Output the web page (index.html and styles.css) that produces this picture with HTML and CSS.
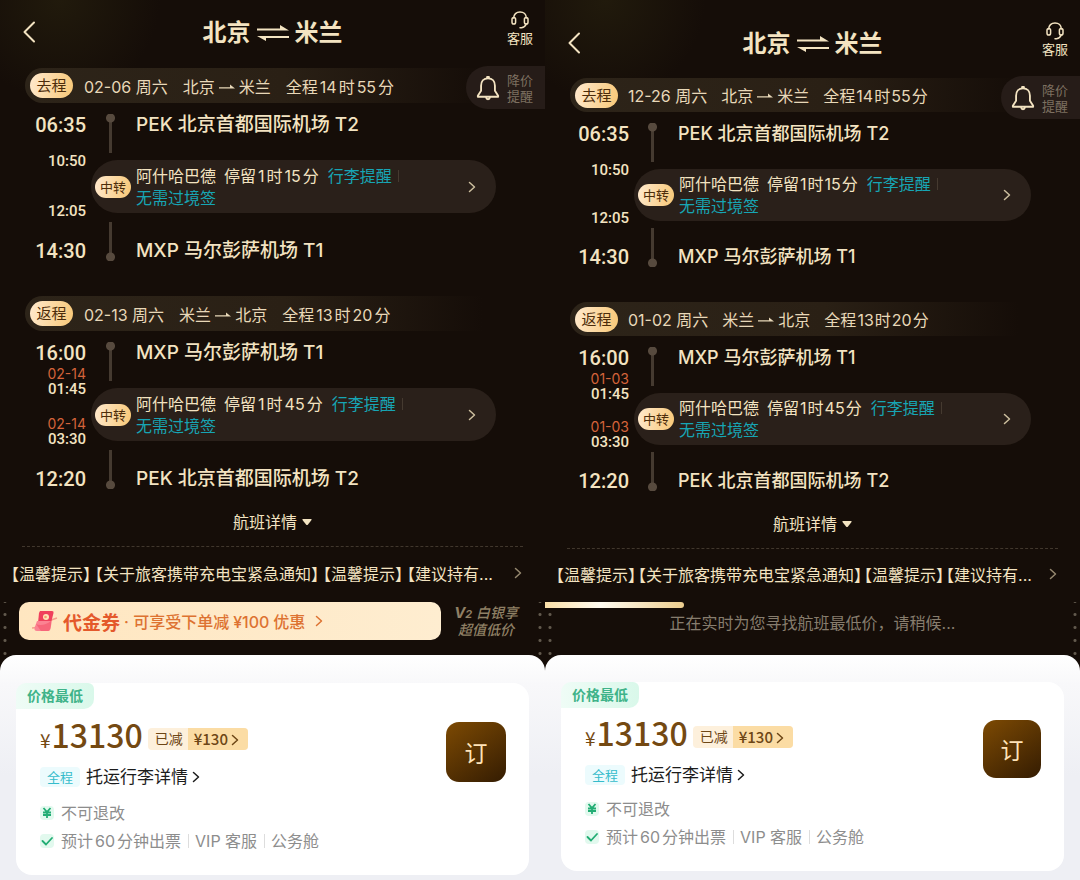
FILE: index.html
```
<!DOCTYPE html>
<html lang="zh-CN">
<head>
    <meta charset="utf-8">
    <meta name="viewport" content="width=device-width, initial-scale=1">
    <title>北京 ⇌ 米兰</title>
    <link rel="stylesheet" href="styles.css">
</head>
<body>
  <!-- shared icons -->
  <svg class="sprite" aria-hidden="true">
    <symbol id="back" viewBox="0 0 14 22">
      <path d="M12 1.500 2.500 11 12 20.500" fill="none" stroke="currentColor" stroke-width="2" stroke-linecap="round" stroke-linejoin="round"/>
    </symbol>
    <symbol id="chevron" viewBox="0 0 8 12">
      <path d="M1.500 1.500 6.500 6l-5 4.500" fill="none" stroke="currentColor" stroke-width="1.500" stroke-linecap="round" stroke-linejoin="round"/>
    </symbol>
    <symbol id="swap" viewBox="0 0 32 16">
      <path d="M0 3.500h23V0l9 5.500H0zM32 11H0l9 5v-3h23z" fill="currentColor"/>
    </symbol>
    <symbol id="to" viewBox="0 0 16 8">
      <path d="M0 4.200h11V1.500l5 4H0z" fill="currentColor"/>
    </symbol>
    <symbol id="headset" viewBox="0 0 18 18">
      <g fill="none" stroke="currentColor" stroke-width="1.500" stroke-linecap="round">
        <path d="M2.700 7C2.700 3.400 5.300 1 9 1s6.300 2.400 6.300 6"/>
        <rect x="1" y="6.500" width="3.600" height="6.500" rx="1.800"/>
        <rect x="13.400" y="6.500" width="3.600" height="6.500" rx="1.800"/>
        <path d="M15.200 13c-.6 2-2.200 3.300-4.700 3.700M9 16.800h1.500"/>
      </g>
    </symbol>
    <symbol id="bell" viewBox="0 0 26 28">
      <g fill="none" stroke="currentColor" stroke-width="2" stroke-linejoin="round" stroke-linecap="round">
        <path d="M13 3.500c-4.800 0-7.500 3.600-7.500 8v5.500L2 22.500v1h22v-1L20.500 17v-5.500c0-4.400-2.700-8-7.500-8z"/>
        <path d="M12 3.200V2h2v1.200M11 24.500c.3 2.200 3.700 2.200 4 0"/>
      </g>
    </symbol>
    <symbol id="caret" viewBox="0 0 10 8">
      <path d="M1 1h8q1 0 .5 1L6 6.500q-1 1-2 0L.5 2Q0 1 1 1z" fill="currentColor"/>
    </symbol>
    <symbol id="coupon" viewBox="0 0 28 24">
      <path d="M1 19q5 0 8-4l17-6" fill="none" stroke="#f5a08c" stroke-width="1.500"/>
      <path d="M9 2h12q2 0 1.500 2L20 14H7l1-10z" fill="#f0405c"/>
      <path d="M6 12h13q2 0 1.500 2l-1 6q-.5 2-2.500 2H6q-3 0-2.500-3z" fill="#fb8392"/>
      <path d="M5 15c4 2 10 1 15-3v4l-1 4q-.5 2-2 2H10z" fill="#f7667a"/>
      <circle cx="15" cy="8" r="3" fill="#ffe3b8"/>
      <circle cx="14.500" cy="8" r="1.300" fill="#f6a06c"/>
    </symbol>
    <symbol id="yen" viewBox="0 0 12 12">
      <path d="M2.500 1 6 5.200 9.500 1M6 5v6M2 5.500h8M2 8h8" fill="none" stroke="currentColor" stroke-width="1.800"/>
    </symbol>
    <symbol id="check" viewBox="0 0 12 12">
      <path d="M1.500 6 5 9.500l6-6.500" fill="none" stroke="currentColor" stroke-width="1.800" stroke-linecap="round" stroke-linejoin="round"/>
    </symbol>
  </svg>

  <main class="screens">
    <!-- February trip -->
    <section class="screen">
      <header class="header">
        <button class="back" aria-label="返回"><svg><use href="#back"/></svg></button>
        <h1 class="title">北京 <svg><use href="#swap"/></svg> 米兰</h1>
        <button class="service"><svg><use href="#headset"/></svg>客服</button>
      </header>

      <article class="leg">
        <div class="leg-bar">
          <span class="badge">去程</span>
          <span>02-06 周六</span>
          <span>北京<svg class="to"><use href="#to"/></svg>米兰</span>
          <span>全程<i>14</i>时<i>55</i>分</span>
        </div>
        <button class="alert"><svg><use href="#bell"/></svg><span>降价<br>提醒</span></button>
        <div class="route">
          <time class="time dep">06:35</time>
          <span class="rail rail-top"></span>
          <h2 class="airport dep">PEK 北京首都国际机场 T2</h2>
          <div class="stop-times">
            <div><time>10:50</time></div>
            <div><time>12:05</time></div>
          </div>
          <button class="transfer">
            <span class="badge small">中转</span>
            <span class="transfer-text">阿什哈巴德<span class="stay">停留<i>1</i>时<i>15</i>分</span><em class="divided">行李提醒</em><br><em>无需过境签</em></span>
            <svg class="chevron"><use href="#chevron"/></svg>
          </button>
          <time class="time arr">14:30</time>
          <span class="rail rail-bottom"></span>
          <h2 class="airport arr">MXP 马尔彭萨机场 T1</h2>
        </div>
      </article>

      <article class="leg">
        <div class="leg-bar">
          <span class="badge">返程</span>
          <span>02-13 周六</span>
          <span>米兰<svg class="to"><use href="#to"/></svg>北京</span>
          <span>全程<i>13</i>时<i>20</i>分</span>
        </div>
        <div class="route">
          <time class="time dep">16:00</time>
          <span class="rail rail-top"></span>
          <h2 class="airport dep">MXP 马尔彭萨机场 T1</h2>
          <div class="stop-times">
            <div><span class="next-day">02-14</span><time>01:45</time></div>
            <div><span class="next-day">02-14</span><time>03:30</time></div>
          </div>
          <button class="transfer">
            <span class="badge small">中转</span>
            <span class="transfer-text">阿什哈巴德<span class="stay">停留<i>1</i>时<i>45</i>分</span><em class="divided">行李提醒</em><br><em>无需过境签</em></span>
            <svg class="chevron"><use href="#chevron"/></svg>
          </button>
          <time class="time arr">12:20</time>
          <span class="rail rail-bottom"></span>
          <h2 class="airport arr">PEK 北京首都国际机场 T2</h2>
        </div>
      </article>

      <button class="details">航班详情<svg><use href="#caret"/></svg></button>
      <a class="notice" href="#notice">
        <span>【温馨提示】</span>
        <span>【关于旅客携带充电宝紧急通知】</span>
        <span>【温馨提示】</span>
        <span>【建议持有...</span>
        <svg class="chevron"><use href="#chevron"/></svg>
      </a>

      <div class="promo">
        <button class="coupon">
          <svg class="coupon-icon"><use href="#coupon"/></svg>
          <strong>代金券</strong>
          <span>· 可享受下单减<i>¥100</i>优惠</span>
          <svg class="chevron"><use href="#chevron"/></svg>
        </button>
        <p class="member"><b>V<small>2</small></b> 白银享<br>超值低价</p>
      </div>

      <div class="sheet">
        <article class="card">
          <span class="lowest">价格最低</span>
          <div class="fare">
            <div class="fare-info">
              <div class="price-row">
                <span class="price"><small>¥</small>13130</span>
                <button class="discount"><span>已减</span><b>¥130 <svg class="chevron"><use href="#chevron"/></svg></b></button>
              </div>
              <a class="baggage" href="#baggage"><span>全程</span>托运行李详情<svg class="chevron"><use href="#chevron"/></svg></a>
              <ul class="rules">
                <li><svg><use href="#yen"/></svg><span>不可退改</span></li>
                <li><svg><use href="#check"/></svg><span>预计<i>60</i>分钟出票</span><span>VIP 客服</span><span>公务舱</span></li>
              </ul>
            </div>
            <button class="book">订</button>
          </div>
        </article>
      </div>
    </section>

    <!-- December trip, still searching -->
    <section class="screen compact">
      <header class="header">
        <button class="back" aria-label="返回"><svg><use href="#back"/></svg></button>
        <h1 class="title">北京 <svg><use href="#swap"/></svg> 米兰</h1>
        <button class="service"><svg><use href="#headset"/></svg>客服</button>
      </header>

      <article class="leg">
        <div class="leg-bar">
          <span class="badge">去程</span>
          <span>12-26 周六</span>
          <span>北京<svg class="to"><use href="#to"/></svg>米兰</span>
          <span>全程<i>14</i>时<i>55</i>分</span>
        </div>
        <button class="alert"><svg><use href="#bell"/></svg><span>降价<br>提醒</span></button>
        <div class="route">
          <time class="time dep">06:35</time>
          <span class="rail rail-top"></span>
          <h2 class="airport dep">PEK 北京首都国际机场 T2</h2>
          <div class="stop-times">
            <div><time>10:50</time></div>
            <div><time>12:05</time></div>
          </div>
          <button class="transfer">
            <span class="badge small">中转</span>
            <span class="transfer-text">阿什哈巴德<span class="stay">停留<i>1</i>时<i>15</i>分</span><em class="divided">行李提醒</em><br><em>无需过境签</em></span>
            <svg class="chevron"><use href="#chevron"/></svg>
          </button>
          <time class="time arr">14:30</time>
          <span class="rail rail-bottom"></span>
          <h2 class="airport arr">MXP 马尔彭萨机场 T1</h2>
        </div>
      </article>

      <article class="leg">
        <div class="leg-bar">
          <span class="badge">返程</span>
          <span>01-02 周六</span>
          <span>米兰<svg class="to"><use href="#to"/></svg>北京</span>
          <span>全程<i>13</i>时<i>20</i>分</span>
        </div>
        <div class="route">
          <time class="time dep">16:00</time>
          <span class="rail rail-top"></span>
          <h2 class="airport dep">MXP 马尔彭萨机场 T1</h2>
          <div class="stop-times">
            <div><span class="next-day">01-03</span><time>01:45</time></div>
            <div><span class="next-day">01-03</span><time>03:30</time></div>
          </div>
          <button class="transfer">
            <span class="badge small">中转</span>
            <span class="transfer-text">阿什哈巴德<span class="stay">停留<i>1</i>时<i>45</i>分</span><em class="divided">行李提醒</em><br><em>无需过境签</em></span>
            <svg class="chevron"><use href="#chevron"/></svg>
          </button>
          <time class="time arr">12:20</time>
          <span class="rail rail-bottom"></span>
          <h2 class="airport arr">PEK 北京首都国际机场 T2</h2>
        </div>
      </article>

      <button class="details">航班详情<svg><use href="#caret"/></svg></button>
      <a class="notice" href="#notice">
        <span>【温馨提示】</span>
        <span>【关于旅客携带充电宝紧急通知】</span>
        <span>【温馨提示】</span>
        <span>【建议持有...</span>
        <svg class="chevron"><use href="#chevron"/></svg>
      </a>

      <div class="searching">
        <div class="progress" role="progressbar" aria-label="查询进度" aria-valuenow="26" style="width: 26%"></div>
        <p>正在实时为您寻找航班最低价，请稍候...</p>
      </div>

      <div class="sheet">
        <article class="card">
          <span class="lowest">价格最低</span>
          <div class="fare">
            <div class="fare-info">
              <div class="price-row">
                <span class="price"><small>¥</small>13130</span>
                <button class="discount"><span>已减</span><b>¥130 <svg class="chevron"><use href="#chevron"/></svg></b></button>
              </div>
              <a class="baggage" href="#baggage"><span>全程</span>托运行李详情<svg class="chevron"><use href="#chevron"/></svg></a>
              <ul class="rules">
                <li><svg><use href="#yen"/></svg><span>不可退改</span></li>
                <li><svg><use href="#check"/></svg><span>预计<i>60</i>分钟出票</span><span>VIP 客服</span><span>公务舱</span></li>
              </ul>
            </div>
            <button class="book">订</button>
          </div>
        </article>
      </div>
    </section>
  </main>
</body>
</html>
```
FILE: styles.css
```
/* Round trip fare page, two screens side by side */
* {
  box-sizing: border-box;
}

body {
  margin: 0;
  background-color: #150d08;
  color: #f3e3c1;
  font-family: "Inter", "Noto Sans CJK SC", sans-serif;
  font-size: 16px;
}

h1, h2, p, ul {
  margin: 0;
  padding: 0;
}

button {
  border: 0;
  padding: 0;
  margin: 0;
  background: none;
  color: inherit;
  font: inherit;
  text-align: left;
  cursor: pointer;
}

a {
  color: inherit;
  text-decoration: none;
}

i, em {
  font-style: normal;
}

/* numbers inside Chinese text get a little air */
i {
  margin: 0 2px;
}

.sprite {
  display: none;
}

.chevron {
  width: 8px;
  height: 12px;
  flex: none;
}

.screens {
  display: grid;
  grid-template-columns: 545fr 535fr;
  min-height: 100vh;
}

.screen {
  --airport: 19px;
  --time-col: 86px;
  --rail-col: 50px;
  --bar: 35px;
  --stops: 81px;
  --pill: 53px;
  --arr-gap: 19px;
  --leg-gap: 32px;
  --book: 60px;
  min-width: 0;
  display: flex;
  flex-direction: column;
  background: radial-gradient(circle at 60px 0, #211a0c 0, #150d08 100px);
}

.compact {
  --airport: 18px;
  --time-col: 84px;
  --rail-col: 49px;
  --bar: 34px;
  --stops: 79px;
  --pill: 52px;
  --arr-gap: 18px;
  --leg-gap: 32px;
  --book: 58px;
}

.compact .leg i {
  margin: 0 1px;
}

/* Header */
.header {
  display: grid;
  grid-template-columns: 1fr auto 1fr;
  align-items: center;
  height: 64px;
  margin-bottom: 4px;
  padding: 0 12px;
}

.compact .header {
  margin-top: 11px;
  margin-bottom: 3px;
}

.back {
  height: 22px;
  margin-left: 10px;
}

.back svg {
  width: 14px;
  height: 22px;
}

.title {
  display: flex;
  align-items: center;
  gap: 6px;
  padding-top: 2px;
  font-size: 24px;
  line-height: 32px;
  font-weight: 700;
}

.title svg {
  width: 32px;
  height: 16px;
}

.service {
  justify-self: end;
  display: flex;
  flex-direction: column;
  align-items: center;
  padding-bottom: 6px;
  font-size: 13px;
  line-height: 19px;
}

.service svg {
  width: 18px;
  height: 18px;
}

/* One flight direction */
.leg {
  position: relative;
  padding-bottom: var(--leg-gap);
}

.leg + .leg {
  padding-bottom: 0;
}

.leg-bar {
  display: flex;
  align-items: center;
  gap: 15px;
  height: var(--bar);
  margin-left: 25px;
  padding-left: 5px;
  border-radius: 18px 0 0 18px;
  background: linear-gradient(90deg, #2d2419, #2a2015 50%, #150d08 88%);
  color: #e8d8b8;
  white-space: nowrap;
}

.compact .leg-bar {
  gap: 14px;
}

.badge {
  height: 25px;
  width: 43px;
  margin-right: -4px;
  border-radius: 13px;
  background: linear-gradient(100deg, #ffe9cd, #f8c877);
  color: #4c2c0a;
  font-size: 15px;
  line-height: 25px;
  text-align: center;
  flex: none;
}

.to {
  width: 16px;
  height: 8px;
  margin: 0 4px;
  vertical-align: 2px;
}

.alert {
  position: absolute;
  right: 0;
  top: -2px;
  display: flex;
  align-items: center;
  gap: 7px;
  height: 43px;
  padding: 0 12px 0 10px;
  border-radius: 22px 0 0 22px;
  background-color: #261c18;
  color: #7d7060;
  font-size: 13px;
  line-height: 16px;
}

.alert svg {
  width: 24px;
  height: 28px;
  color: #f3e3c1;
}

.route {
  display: grid;
  grid-template-columns: var(--time-col) var(--rail-col) 1fr;
  grid-template-rows: 26px var(--stops) auto;
  padding-top: 9px;
}

.dep {
  grid-row: 1;
}

.arr {
  grid-row: 3;
  margin-top: var(--arr-gap);
}

.time {
  grid-column: 1;
  justify-self: end;
  font-family: "Roboto", sans-serif;
  font-size: 20px;
  line-height: 26px;
  font-weight: 500;
}

.airport {
  grid-column: 3;
  font-size: var(--airport);
  line-height: 26px;
  font-weight: 500;
  white-space: nowrap;
}

.rail {
  grid-column: 2;
  width: 9px;
  height: 39px;
  margin-left: 20px;
  background:
    radial-gradient(circle at 50% 4px, #574a3e 4px, transparent 5px),
    linear-gradient(#453a30, #453a30) center / 3px 100% no-repeat;
}

.compact .rail {
  margin-left: 19px;
}

.rail-top {
  grid-row: 1 / 3;
  margin-top: 2px;
}

.rail-bottom {
  grid-row: 2 / 4;
  align-self: end;
  margin-bottom: 3px;
  background:
    radial-gradient(circle at 50% 35px, #574a3e 4px, transparent 5px),
    linear-gradient(#453a30, #453a30) center / 3px 100% no-repeat;
}

.stop-times {
  grid-column: 1;
  grid-row: 2;
  display: flex;
  flex-direction: column;
  justify-content: space-between;
  font-family: "Roboto", sans-serif;
  font-size: 15px;
  line-height: 16px;
  font-weight: 500;
  text-align: right;
}

.stop-times div {
  height: 31px;
  display: flex;
  flex-direction: column;
  justify-content: flex-end;
}

.next-day {
  color: #d4633a;
  font-family: "Inter", sans-serif;
  font-size: 14px;
  line-height: 15px;
  font-weight: 400;
}

.transfer {
  grid-column: 2 / 4;
  grid-row: 2;
  align-self: end;
  display: flex;
  align-items: center;
  gap: 5px;
  height: var(--pill);
  margin: 0 49px 6px 5px;
  padding: 0 20px 0 4px;
  border-radius: 27px;
  background-color: #2a201a;
}

.compact .transfer {
  margin-bottom: 5px;
}

.small {
  width: 36px;
  height: 22px;
  margin: 0;
  font-size: 13px;
  line-height: 22px;
}

.transfer-text {
  flex: 1;
  line-height: 22px;
  white-space: nowrap;
}

.transfer-text em {
  color: #17a5b4;
}

.stay {
  margin: 0 9px 0 8px;
}

.transfer-text .divided {
  padding-right: 7px;
  background: linear-gradient(#453a30, #453a30) right center / 1px 12px no-repeat;
}

.transfer .chevron {
  color: #cdbf9f;
}

.details {
  display: flex;
  align-items: center;
  justify-content: center;
  gap: 5px;
  margin: 0 22px;
  padding: 17px 0 11px;
  border-bottom: 1px dashed #41372d;
  line-height: 26px;
}

.details svg {
  width: 10px;
  height: 8px;
}

.notice {
  display: flex;
  align-items: center;
  gap: 4px;
  height: 55px;
  padding: 0 23px 4px 11px;
  white-space: nowrap;
}

.notice span {
  font-feature-settings: "halt";
}

.notice .chevron {
  margin-left: auto;
  color: #95886f;
}

.compact .notice {
  height: 53px;
  gap: 2px;
}

/* Voucher or search state, with dotted edges */
.promo, .searching {
  height: 53px;
  background:
    radial-gradient(circle, #62594d 1px, transparent 2px) 0 -7px / 10px 13px repeat-y,
    radial-gradient(circle, #62594d 1px, transparent 2px) right -7px / 10px 13px repeat-y;
}

.promo {
  display: flex;
  align-items: flex-start;
  padding: 0 27px 0 19px;
  gap: 13px;
}

.coupon {
  flex: 1;
  display: flex;
  align-items: center;
  gap: 4px;
  height: 38px;
  padding-left: 12px;
  border-radius: 10px;
  background: linear-gradient(90deg, #ffe6c0, #feedd0);
  color: #dd7231;
  font-weight: 500;
  white-space: nowrap;
}

.coupon strong {
  color: #e4592b;
  font-size: 19px;
}

.coupon i {
  margin: 0 4px;
}

.coupon-icon {
  width: 28px;
  height: 24px;
}

.coupon .chevron {
  margin-left: 6px;
}

.member {
  color: #8f8065;
  font-size: 14px;
  line-height: 16px;
  font-style: italic;
  font-weight: 500;
  text-align: center;
  padding-top: 3px;
}

.member b {
  font-size: 15px;
}

.member small {
  font-size: 11px;
}

.searching p {
  color: #877d6e;
  line-height: 30px;
  text-align: center;
}

.progress {
  height: 6px;
  border-radius: 0 3px 3px 0;
  background: linear-gradient(90deg, #fbe0a8, #fffbf0 40%, #eccd8e);
}

/* Fare sheet */
.sheet {
  flex: 1;
  padding: 28px 16px 5px;
  border-radius: 16px 16px 0 0;
  background: linear-gradient(#ffffff, #f8f8fa 30px, #eeeff4 120px);
  color: #1c1c1c;
}

.card {
  padding-bottom: 22px;
  border-radius: 16px;
  background-color: #ffffff;
}

.lowest {
  display: block;
  width: 78px;
  height: 26px;
  border-radius: 10px 6px 10px 0;
  background: linear-gradient(90deg, #effcf6, #d9f8ea);
  color: #3fb389;
  font-size: 14px;
  line-height: 26px;
  font-weight: 700;
  text-align: center;
}

.fare {
  display: flex;
  align-items: flex-start;
  justify-content: space-between;
  padding: 8px 23px 0 24px;
}

.price-row {
  display: flex;
  align-items: center;
  gap: 5px;
  height: 40px;
}

.price {
  color: #744912;
  font-family: "Noto Sans CJK SC", sans-serif;
  font-size: 32px;
  line-height: 40px;
  font-weight: 500;
}

.price small {
  margin-right: 1px;
  font-size: 19px;
  font-weight: 400;
}

.discount {
  display: flex;
  height: 22px;
  margin-top: 4px;
  border-radius: 4px;
  overflow: hidden;
  background-color: #fdf0dc;
  color: #6d4615;
  font-size: 14px;
  line-height: 22px;
}

.discount span {
  padding: 0 5px 0 7px;
}

.discount b {
  padding: 0 9px 0 6px;
  background-color: #fbdca4;
  font-family: "Noto Sans CJK SC", sans-serif;
  font-size: 15px;
  font-weight: 500;
}

.discount .chevron {
  vertical-align: -1px;
}

.baggage {
  display: flex;
  align-items: center;
  margin-top: 8px;
  font-size: 17px;
  line-height: 24px;
}

.baggage span {
  margin-right: 6px;
  padding: 0 7px;
  border-radius: 4px;
  background-color: #ecfbfd;
  color: #35bccb;
  font-size: 13px;
  line-height: 20px;
}

.baggage .chevron {
  margin-left: 4px;
}

.rules {
  display: grid;
  gap: 4px;
  margin-top: 12px;
  list-style: none;
  color: #8d8d8d;
  line-height: 24px;
}

.compact .rules {
  margin-top: 10px;
}

.rules li {
  display: flex;
  align-items: center;
}

.rules svg {
  width: 14px;
  height: 14px;
  margin-right: 7px;
  padding: 1px;
  border-radius: 4px;
  background-color: #e2f9ee;
  color: #22ad74;
}

.rules span + span {
  margin-left: 7px;
  padding-left: 7px;
  background: linear-gradient(#dddddd, #dddddd) left center / 1px 14px no-repeat;
}

.book {
  width: var(--book);
  height: var(--book);
  margin-top: 5px;
  border-radius: 13px;
  background: linear-gradient(145deg, #7d4a03, #341c02);
  color: #ffe3b8;
  font-size: 23px;
  text-align: center;
}

.compact .sheet {
  padding-top: 27px;
}

.compact .fare {
  padding-top: 7px;
}
```
